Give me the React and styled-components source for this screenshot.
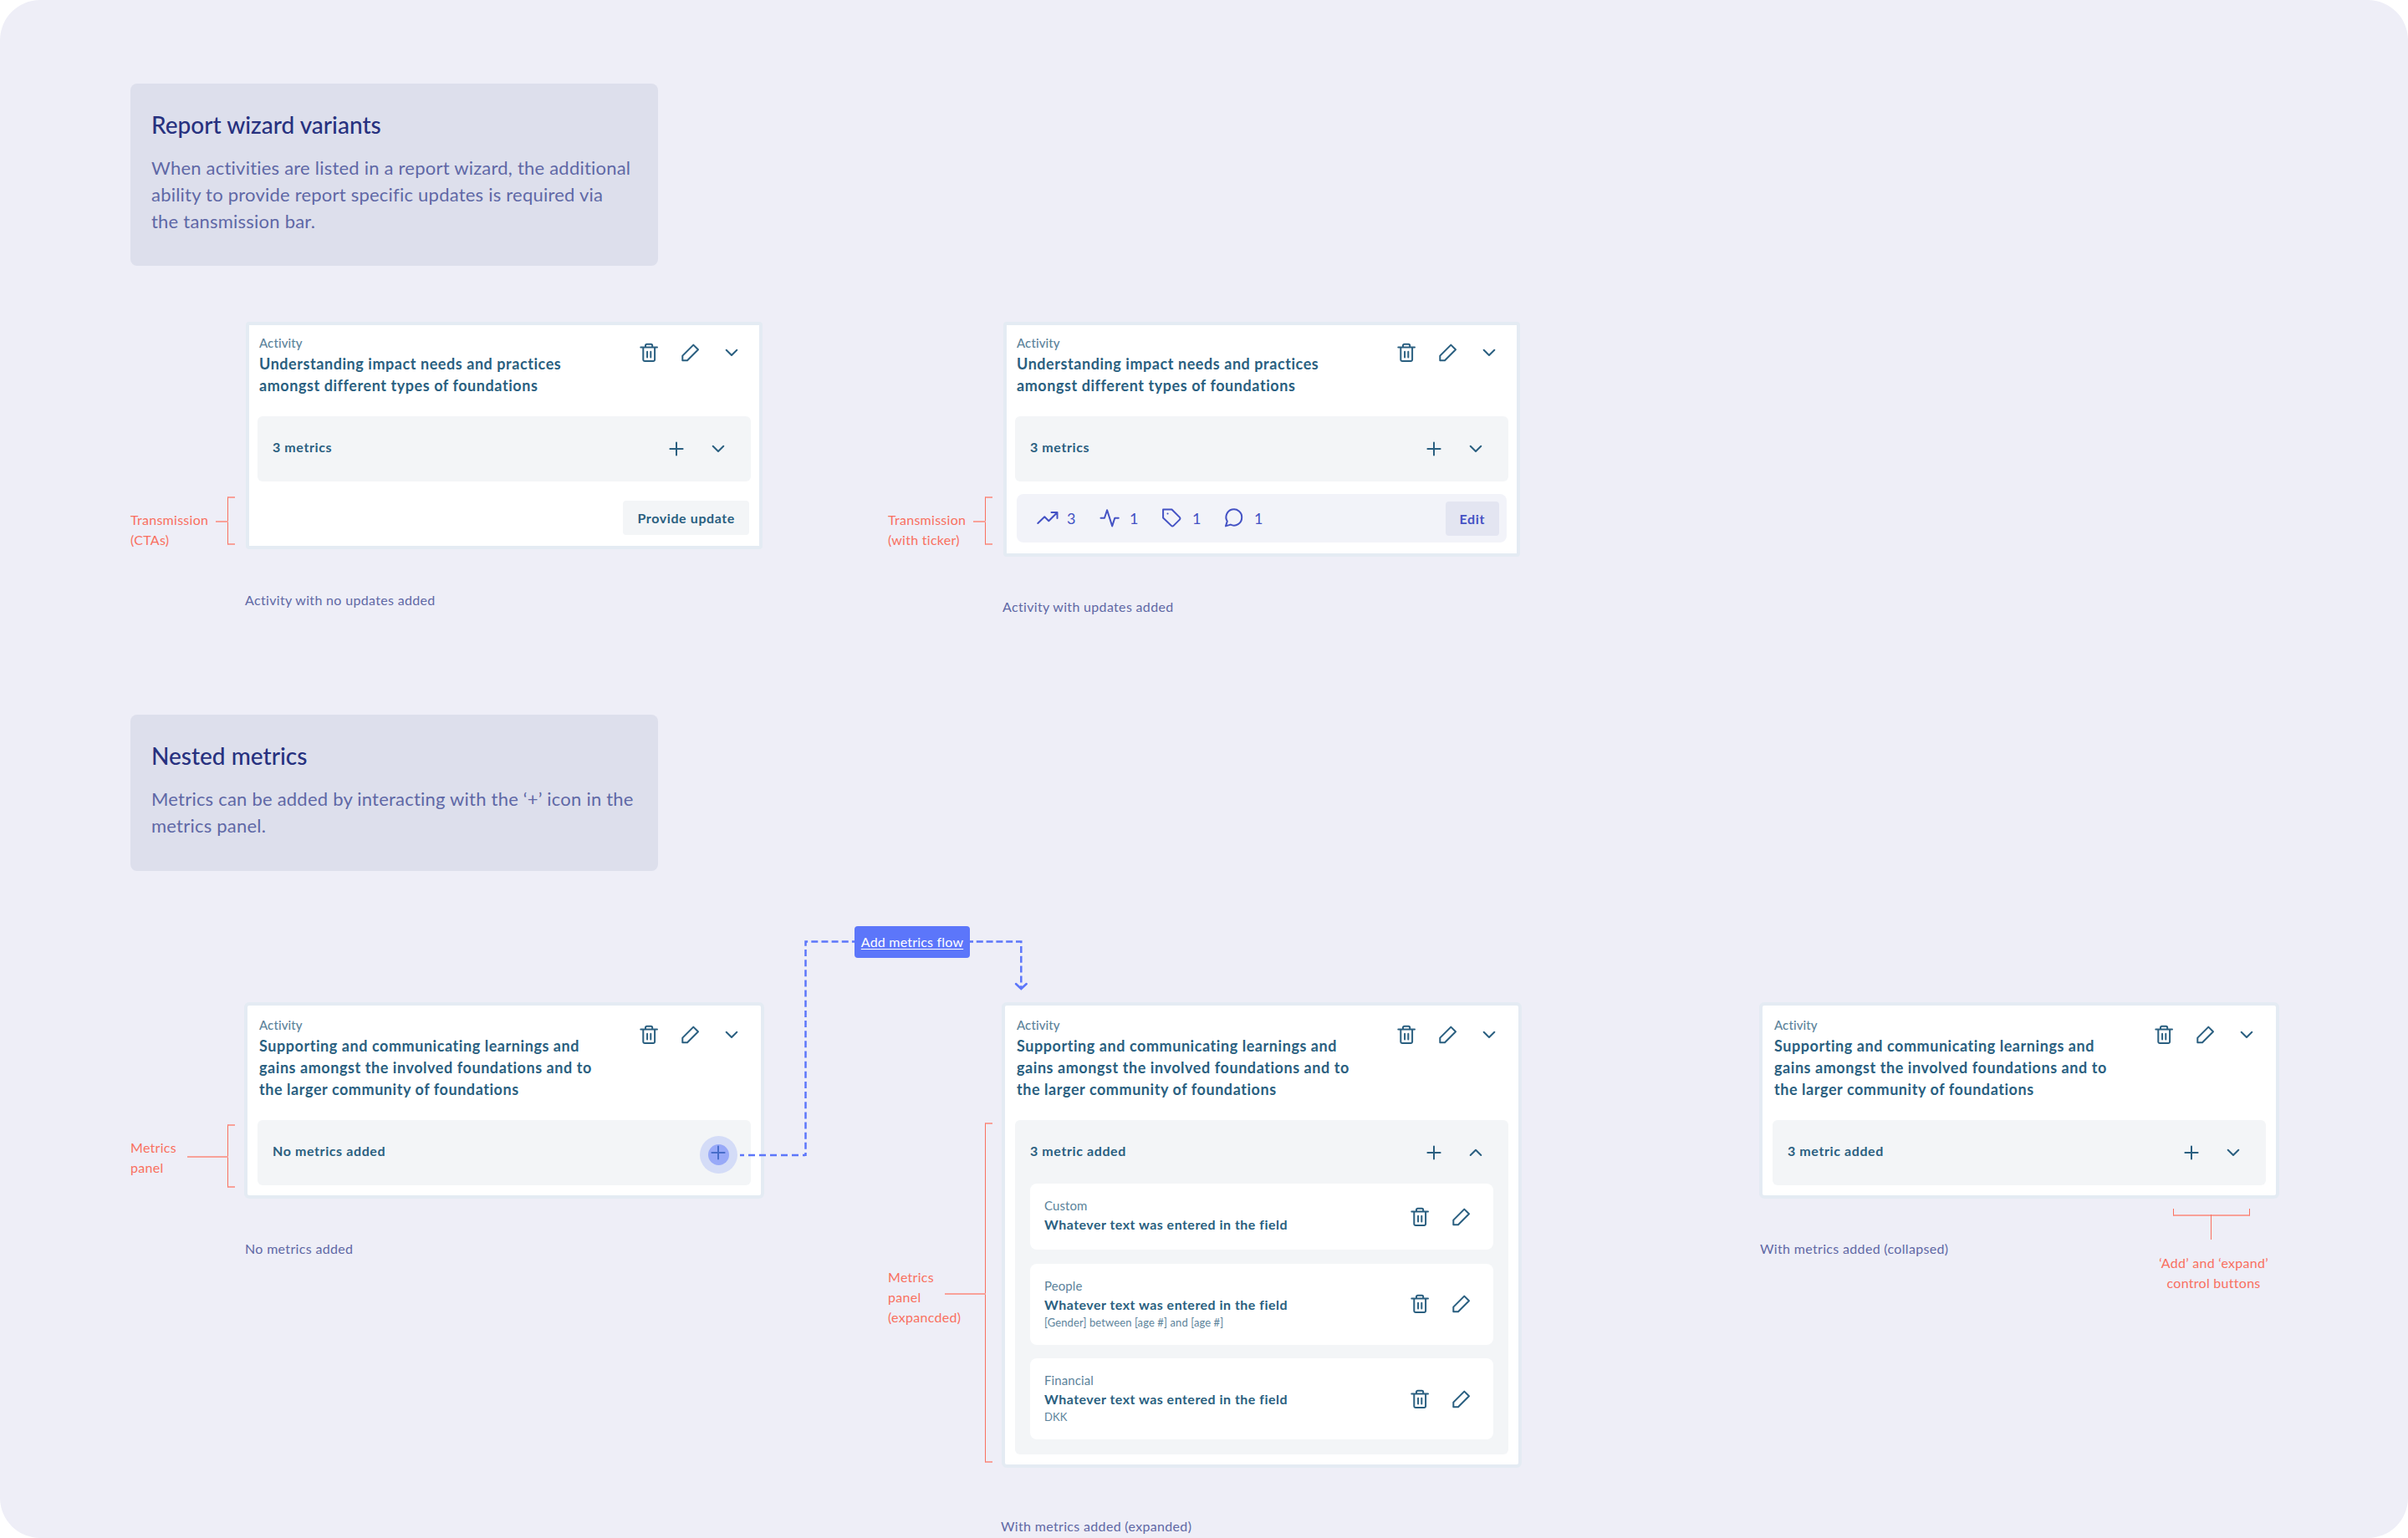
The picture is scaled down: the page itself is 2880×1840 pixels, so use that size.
import styled, { createGlobalStyle } from "styled-components"

const App = () => {
    return (
        <>
            <GlobalStyle />
            <Board>
                <Intro $height={218}>
                    <IntroTitle>Report wizard variants</IntroTitle>
                    <IntroText>When activities are listed in a report wizard, the additional<br />ability to provide report specific updates is required via<br />the tansmission bar.</IntroText>
                </Intro>
                <Row $top={67} $height={537}>
                    <Variant>
                        <Annotation>
                            <Label $top={225}>Transmission<br />(CTAs)</Label>
                            <Bracket $top={209} $height={58} $stem={15} $stemTop={27} />
                        </Annotation>
                        <div>
                            <Card $pad={10}>
                                <CardHead title={<>Understanding impact needs and practices<br />amongst different types of foundations</>} />
                                <Panel>
                                    <PanelBar text="3 metrics" />
                                </Panel>
                                <Actions>
                                    <Button>Provide update</Button>
                                </Actions>
                            </Card>
                            <Caption>Activity with no updates added</Caption>
                        </div>
                    </Variant>
                    <Variant>
                        <Annotation>
                            <Label $top={225}>Transmission<br />(with ticker)</Label>
                            <Bracket $top={209} $height={58} $stem={15} $stemTop={27} />
                        </Annotation>
                        <div>
                            <Card $pad={10}>
                                <CardHead title={<>Understanding impact needs and practices<br />amongst different types of foundations</>} />
                                <Panel>
                                    <PanelBar text="3 metrics" />
                                </Panel>
                                <Ticker>
                                    <Stat $width={75}><TrendIcon />3</Stat>
                                    <Stat $width={75}><PulseIcon />1</Stat>
                                    <Stat $width={74}><TagIcon />1</Stat>
                                    <Stat $width={74}><CommentIcon />1</Stat>
                                    <Button $accent>Edit</Button>
                                </Ticker>
                            </Card>
                            <Caption $top={47}>Activity with updates added</Caption>
                        </div>
                    </Variant>
                </Row>
                <Intro $height={187}>
                    <IntroTitle>Nested metrics</IntroTitle>
                    <IntroText>Metrics can be added by interacting with the ‘+’ icon in the<br />metrics panel.</IntroText>
                </Intro>
                <Row $top={157} $height={641}>
                    <Variant>
                        <Annotation>
                            <Label $top={162}>Metrics<br />panel</Label>
                            <Bracket $top={146} $height={76} $stem={49} $stemTop={36} />
                        </Annotation>
                        <div>
                            <Card $pad={12}>
                                <CardHead title={longTitle} />
                                <Panel>
                                    <PanelBar text="No metrics added" pulse />
                                </Panel>
                            </Card>
                            <Caption $top={47}>No metrics added</Caption>
                        </div>
                    </Variant>
                    <Variant>
                        <Annotation>
                            <Label $top={317}>Metrics<br />panel<br />(expancded)</Label>
                            <Bracket $top={144} $height={407} $stem={49} $stemTop={202} />
                        </Annotation>
                        <div>
                            <Card $pad={12}>
                                <CardHead title={longTitle} />
                                <Panel $open>
                                    <PanelBar text="3 metric added" open />
                                    <Metrics>
                                        <Metric type="Custom" />
                                        <Metric type="People" note="[Gender] between [age #] and [age #]" />
                                        <Metric type="Financial" note="DKK" />
                                    </Metrics>
                                </Panel>
                            </Card>
                            <Caption $top={57} $left={-3}>With metrics added (expanded)</Caption>
                        </div>
                    </Variant>
                    <Variant>
                        <Annotation />
                        <div>
                            <Card $pad={12}>
                                <CardHead title={longTitle} />
                                <Panel>
                                    <PanelBar text="3 metric added" />
                                </Panel>
                            </Card>
                            <Under>
                                <Caption $top={47}>With metrics added (collapsed)</Caption>
                                <Controls>
                                    <BracketDown />
                                    <Label $center>‘Add’ and ‘expand’<br />control buttons</Label>
                                </Controls>
                            </Under>
                        </div>
                    </Variant>
                    <Connector viewBox="0 0 348 270">
                        <path d="M2 262H80" strokeDasharray="8 5" strokeDashoffset="3" />
                        <path d="M80.500 263V6.500H139" strokeDasharray="8 4.150" strokeDashoffset="4" />
                        <path d="M277 6.500H338.300V62" strokeDasharray="8 3.800" strokeDashoffset="4" />
                        <path d="M332 57L338.300 63L344.700 57" strokeLinecap="round" />
                    </Connector>
                    <FlowLink>Add metrics flow</FlowLink>
                </Row>
            </Board>
        </>
    )
}

export default App

const longTitle = <>Supporting and communicating learnings and<br />gains amongst the involved foundations and to<br />the larger community of foundations</>

const CardHead = ({ title }) => (
    <Head>
        <div>
            <Kind>Activity</Kind>
            <Title>{title}</Title>
        </div>
        <Tools>
            <TrashIcon />
            <PencilIcon />
            <ChevronIcon />
        </Tools>
    </Head>
)

const PanelBar = ({ text, open, pulse }) => (
    <Bar>
        <BarText>{text}</BarText>
        <Tools>
            {pulse ? <Pulse><PlusIcon /></Pulse> : <><PlusIcon /><ChevronIcon up={open} /></>}
        </Tools>
    </Bar>
)

const Metric = ({ type, note }) => (
    <MetricCard $tall={!!note}>
        <MetricBody>
            <Kind $light>{type}</Kind>
            <MetricText>Whatever text was entered in the field</MetricText>
            {note && <Note>{note}</Note>}
        </MetricBody>
        <Tools>
            <TrashIcon />
            <PencilIcon />
        </Tools>
    </MetricCard>
)

const TrashIcon = () => (
    <Icon viewBox="0 0 24 24">
        <path d="M2.300 5.500H22M8 5.500V3.500A1.700 1.700 0 0 1 9.700 1.800H14.500A1.700 1.700 0 0 1 16.200 3.500V5.500M5.300 5.500V20.300A1.800 1.800 0 0 0 7.100 22.100H17.300A1.800 1.800 0 0 0 19.100 20.300V5.500M10.100 10.800V17.500M14.300 10.800V17.500" />
    </Icon>
)

const PencilIcon = () => (
    <Icon viewBox="0 0 24 24">
        <path d="M15.300 2.600L21 8.300L8 21.300H2.300V15.600Z" />
    </Icon>
)

const ChevronIcon = ({ up }) => (
    <Icon viewBox="0 0 24 24">
        <path d={up ? "M5.700 15L12 8.800L18.300 15" : "M5.700 8.800L12 15L18.300 8.800"} />
    </Icon>
)

const PlusIcon = () => (
    <Icon viewBox="0 0 24 24">
        <path d="M12 4.400V19.600M4.400 12H19.600" />
    </Icon>
)

const TrendIcon = () => (
    <Icon viewBox="0 0 24 24">
        <path d="M1.300 18L9.300 10.200L14.300 15.300L24.300 5.300M17.500 5.100H24.500V12" />
    </Icon>
)

const PulseIcon = () => (
    <Icon viewBox="0 0 24 24">
        <path d="M22.800 11.700H18.300L15.200 21.400L9.100 2.200L6 11.700H1.500" />
    </Icon>
)

const TagIcon = () => (
    <Icon viewBox="0 0 24 24">
        <path d="M1.100 1.500H11.500L20.900 10.900A1.900 1.900 0 0 1 20.900 13.600L13.600 20.900A1.900 1.900 0 0 1 10.900 20.900L1.100 11.500ZM6.500 6.600H6.600" />
    </Icon>
)

const CommentIcon = () => (
    <Icon viewBox="0 0 24 24">
        <path d="M21.200 11.200A9.300 9.300 0 0 1 7.800 19.600L2 21.400L3.800 15.600A9.400 9.400 0 1 1 21.200 11.200Z" />
    </Icon>
)

const GlobalStyle = createGlobalStyle`
    body {
        margin: 0;
        background-color: white;
        font-family: Lato, "Liberation Sans", sans-serif;
    }
    * {
        box-sizing: border-box;
    }
    h2, h3, p {
        margin: 0;
    }
`

const Board = styled.div`
    width: 2880px;
    height: 1840px;
    padding: 100px 0 0 156px;
    overflow: hidden;
    border-radius: 48px;
    background-color: #eeeef7;
`
const Intro = styled.div`
    width: 631px;
    height: ${props => props.$height}px;
    padding: 31px 25px;
    border-radius: 8px;
    background-color: #dddfec;
`
const IntroTitle = styled.h2`
    font-size: 28px;
    font-weight: 500;
    line-height: 36px;
    color: #27317f;
`
const IntroText = styled.p`
    margin-top: 18px;
    font-size: 22px;
    line-height: 32px;
    letter-spacing: 0.220px;
    white-space: nowrap;
    color: #5f68a6;
`
const Row = styled.div`
    position: relative;
    display: flex;
    height: ${props => props.$height}px;
    padding-top: ${props => props.$top}px;
`
const Variant = styled.div`
    display: flex;
    flex: none;
    width: 906px;
`
const Annotation = styled.div`
    display: flex;
    flex: none;
    justify-content: space-between;
    width: 125px;
    margin-right: 13px;
`
const Label = styled.p`
    width: 80px;
    margin-top: ${props => props.$top || 0}px;
    font-size: 16px;
    line-height: 24px;
    letter-spacing: 0.280px;
    white-space: nowrap;
    color: #f9705f;
    ${props => props.$center && "width: auto; text-align: center;"}
`
const Bracket = styled.div`
    position: relative;
    width: 9px;
    height: ${props => props.$height}px;
    margin-top: ${props => props.$top}px;
    border: solid #f8a199;
    border-width: 2px 0;
    border-left: 1px solid #f9705f;
    &::before {
        content: "";
        position: absolute;
        top: ${props => props.$stemTop}px;
        right: 100%;
        width: ${props => props.$stem}px;
        height: 2px;
        background-color: #f8a199;
    }
`
const Card = styled.div`
    width: ${props => 598 + props.$pad * 2}px;
    margin-left: ${props => 10 - props.$pad}px;
    padding: ${props => props.$pad}px;
    border: 4px solid #e4ebf3;
    border-radius: ${props => props.$pad === 12 ? 6 : 4}px;
    background-color: white;
`
const Head = styled.div`
    display: flex;
    justify-content: space-between;
    margin-bottom: 24px;
    padding: 1px 11px 0 2px;
`
const Kind = styled.p`
    margin-top: ${props => props.$light ? 0 : -1}px;
    padding-bottom: ${props => props.$light ? 0 : 1}px;
    font-size: 15px;
    line-height: 22px;
    font-weight: ${props => props.$light ? 400 : 500};
    letter-spacing: 0.100px;
    color: #5c839b;
`
const Title = styled.h3`
    font-size: 18px;
    font-weight: 700;
    line-height: 26px;
    letter-spacing: 0.560px;
    white-space: nowrap;
    color: #2a5f80;
`
const Tools = styled.div`
    display: flex;
    gap: 25.500px;
    height: 24px;
    margin-top: 10px;
`
const Icon = styled.svg`
    display: block;
    width: 24px;
    height: 24px;
    overflow: visible;
    fill: none;
    stroke: currentColor;
    stroke-width: 2;
    stroke-linecap: round;
    stroke-linejoin: round;
    color: #2a5f80;
`
const Panel = styled.div`
    padding: 0 18px ${props => props.$open ? 18 : 0}px;
    border-radius: 6px;
    background-color: #f3f5f7;
`
const Bar = styled.div`
    display: flex;
    justify-content: space-between;
    height: 78px;
    padding: 17px 9.500px 0 0;
`
const BarText = styled.p`
    margin-top: 8px;
    font-size: 16px;
    font-weight: 700;
    line-height: 24px;
    letter-spacing: 0.600px;
    color: #2a5f80;
`
const Pulse = styled.div`
    position: relative;
    z-index: 0;
    &::before, &::after {
        content: "";
        position: absolute;
        border-radius: 50%;
    }
    &::before {
        top: -8px;
        left: -10px;
        width: 45px;
        height: 45px;
        background-color: rgba(92, 118, 250, 0.2);
    }
    &::after {
        top: 2px;
        left: 0;
        width: 25px;
        height: 25px;
        background-color: rgba(92, 118, 250, 0.5);
    }
`
const Actions = styled.div`
    display: flex;
    justify-content: flex-end;
    padding: 23px 2px 3px 0;
`
const Button = styled.button`
    height: 41px;
    margin: 0;
    padding: 0 17px;
    border: none;
    border-radius: 4px;
    background-color: ${props => props.$accent ? "#e3e5f1" : "#f3f5f7"};
    color: ${props => props.$accent ? "#4452c4" : "#2a5f80"};
    font-family: inherit;
    font-size: 16px;
    font-weight: 700;
    letter-spacing: 0.600px;
    ${props => props.$accent && "margin-left: auto;"}
`
const Ticker = styled.div`
    display: flex;
    align-items: center;
    height: 58px;
    margin: 15px 2px 3px;
    padding: 0 9px 0 24px;
    border-radius: 8px;
    background-color: #f2f3f9;
`
const Stat = styled.div`
    display: flex;
    align-items: center;
    gap: 12px;
    width: ${props => props.$width}px;
    font-size: 18px;
    color: #4452c4;
    ${Icon} {
        color: inherit;
    }
`
const Metrics = styled.div`
    display: flex;
    flex-direction: column;
    gap: 16.500px;
    margin-top: -2px;
`
const MetricCard = styled.div`
    display: flex;
    align-items: center;
    justify-content: space-between;
    height: ${props => props.$tall ? 97 : 79}px;
    padding: 0 26.500px 0 17px;
    border-radius: 8px;
    background-color: white;
    ${Tools} {
        margin: 0;
    }
`
const MetricBody = styled.div`
    padding-bottom: 3px;
`
const MetricText = styled.p`
    font-size: 16px;
    font-weight: 700;
    line-height: 24px;
    letter-spacing: 0.470px;
    color: #2a5f80;
`
const Note = styled.p`
    font-size: 13px;
    line-height: 18px;
    letter-spacing: 0.100px;
    color: #5c839b;
`
const Caption = styled.p`
    margin: ${props => props.$top || 48}px 0 0 ${props => props.$left || -1}px;
    font-size: 16px;
    line-height: 26px;
    letter-spacing: 0.330px;
    white-space: nowrap;
    color: #6068a5;
`
const Under = styled.div`
    display: flex;
    justify-content: space-between;
    width: 607px;
`
const Controls = styled.div`
    display: flex;
    flex-direction: column;
    align-items: center;
    margin-top: 12px;
    gap: 44px;
`
const BracketDown = styled.div`
    position: relative;
    width: 92px;
    height: 9px;
    margin-right: 6px;
    border: solid #f9705f;
    border-width: 0 1px;
    border-bottom: 2px solid #f8a199;
    &::before {
        content: "";
        position: absolute;
        top: 100%;
        left: 44px;
        width: 1px;
        height: 30px;
        background-color: #f9705f;
    }
`
// The dashed route and its link lie over the cards of the row
const Connector = styled.svg`
    position: absolute;
    left: 727px;
    top: 78px;
    width: 348px;
    height: 270px;
    fill: none;
    stroke: #5c76fa;
    stroke-width: 2.500;
`
const FlowLink = styled.a`
    position: absolute;
    left: 866px;
    top: 66px;
    width: 138px;
    height: 38px;
    border-radius: 4px;
    background-color: #5c76fa;
    color: white;
    font-size: 16px;
    line-height: 38px;
    letter-spacing: 0.200px;
    text-align: center;
    text-decoration: underline;
    text-underline-offset: 2px;
`
